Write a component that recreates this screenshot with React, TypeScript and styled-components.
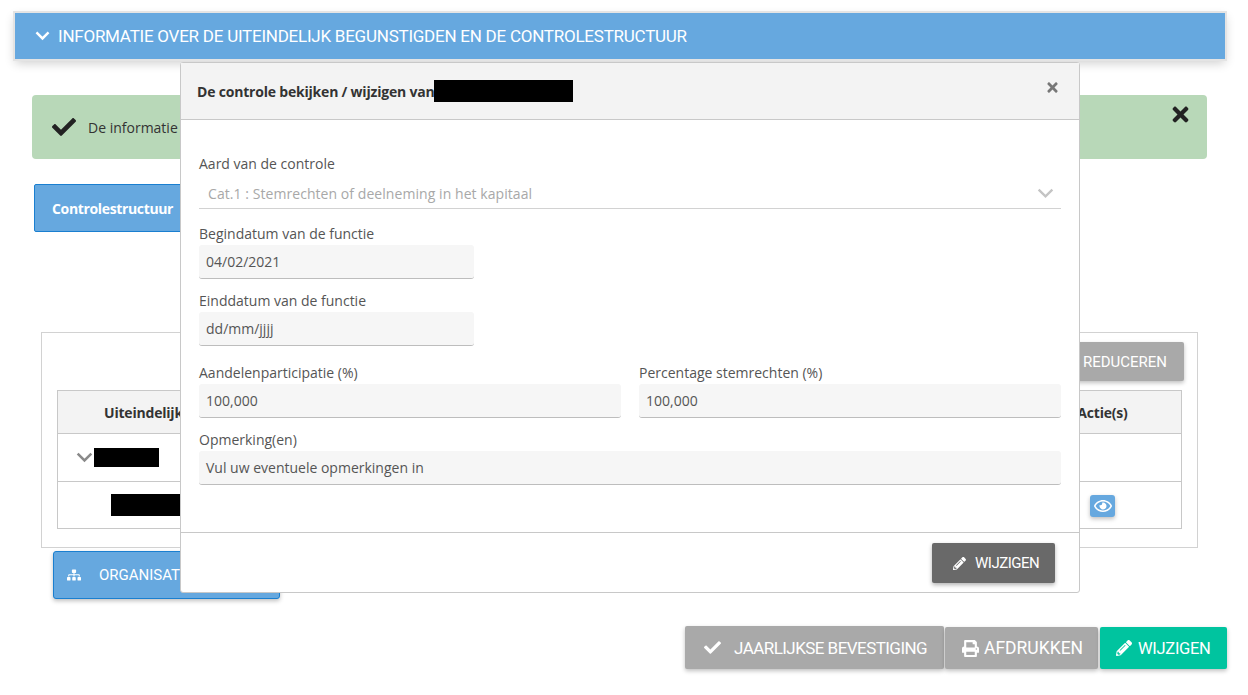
import React from 'react';
import styled, { createGlobalStyle } from 'styled-components';
import { FaCheck, FaTimes, FaPencilAlt, FaPrint, FaSitemap, FaRegEye } from 'react-icons/fa';

const Chevron: React.FC<{ size: number; stroke: number; color: string }> = ({ size, stroke, color }) => (
  <svg width={size} height={size * 0.62} viewBox="0 0 16 10" fill="none" style={{ display: 'block', flex: 'none' }}>
    <path d="M1.5 1.5 L8 8 L14.5 1.5" stroke={color} strokeWidth={stroke} />
  </svg>
);

const App: React.FC = () => {
  return (
    <Page>
      <GlobalStyle />
      <SectionBar>
        <Chevron size={15} stroke={2.6} color="#fff" />
        <span>INFORMATIE OVER DE UITEINDELIJK BEGUNSTIGDEN EN DE CONTROLESTRUCTUUR</span>
      </SectionBar>
      <Alert>
        <FaCheck size={24} color="#222" />
        <AlertText>De informatie werd goed opgeslagen</AlertText>
        <AlertClose><FaTimes size={23} /></AlertClose>
      </Alert>
      <TabRow>
        <TabButton>Controlestructuur</TabButton>
      </TabRow>
      <Panel>
        <PanelActions>
          <GreyButton>REDUCEREN</GreyButton>
        </PanelActions>
        <Table>
          <thead>
            <tr>
              <Th>Uiteindelijk</Th>
              <ActionTh>Actie(s)</ActionTh>
            </tr>
          </thead>
          <tbody>
            <tr>
              <ParentTd>
                <ParentCell>
                  <Chevron size={17} stroke={2.4} color="#8a8a8a" />
                  <Redacted $w={65} $h={19} />
                </ParentCell>
              </ParentTd>
              <ActionTd />
            </tr>
            <tr>
              <ChildTd><Redacted $w={120} $h={22} /></ChildTd>
              <ActionTd><EyeButton><FaRegEye size={18} /></EyeButton></ActionTd>
            </tr>
          </tbody>
        </Table>
      </Panel>
      <OrgButton>
        <FaSitemap size={14} />
        <span>ORGANISATIESCHEMA</span>
      </OrgButton>
      <Footer>
        <ConfirmButton><FaCheck size={17} /><span>JAARLIJKSE BEVESTIGING</span></ConfirmButton>
        <PrintButton><FaPrint size={17} /><span>AFDRUKKEN</span></PrintButton>
        <EditButton><FaPencilAlt size={16} /><span>WIJZIGEN</span></EditButton>
      </Footer>

      <Modal>
        <ModalHeader>
          <ModalTitle>De controle bekijken / wijzigen van</ModalTitle>
          <Redacted $w={139} $h={22} />
          <ModalClose><FaTimes size={15} /></ModalClose>
        </ModalHeader>
        <ModalBody>
          <Field>
            <Label>Aard van de controle</Label>
            <SelectBox>
              <span>Cat.1 : Stemrechten of deelneming in het kapitaal</span>
              <Chevron size={17} stroke={2.2} color="#c4c4c4" />
            </SelectBox>
          </Field>
          <HalfField>
            <Label>Begindatum van de functie</Label>
            <InputBox>04/02/2021</InputBox>
          </HalfField>
          <HalfField>
            <Label>Einddatum van de functie</Label>
            <InputBox>dd/mm/jjjj</InputBox>
          </HalfField>
          <TwoColumns>
            <Field>
              <Label>Aandelenparticipatie (%)</Label>
              <InputBox>100,000</InputBox>
            </Field>
            <Field>
              <Label>Percentage stemrechten (%)</Label>
              <InputBox>100,000</InputBox>
            </Field>
          </TwoColumns>
          <Field>
            <Label>Opmerking(en)</Label>
            <InputBox>Vul uw eventuele opmerkingen in</InputBox>
          </Field>
        </ModalBody>
        <ModalFooter>
          <DarkButton><FaPencilAlt size={13} /><span>WIJZIGEN</span></DarkButton>
        </ModalFooter>
      </Modal>
    </Page>
  );
};

const GlobalStyle = createGlobalStyle`
  html, body {
    margin: 0;
    padding: 0;
    background: #fff;
  }
  * {
    box-sizing: border-box;
  }
  svg {
    flex: none;
  }
`;

const capsFont = `'Roboto', 'Liberation Sans', sans-serif`;

const Page = styled.div`
  position: relative;
  width: 1248px;
  height: 695px;
  overflow: hidden;
  padding: 13px 23px 0 15px;
  font-family: 'Open Sans', 'Liberation Sans', sans-serif;
  color: #333;
`;

const SectionBar = styled.div`
  display: flex;
  align-items: center;
  gap: 8px;
  width: 1210px;
  height: 46px;
  padding: 0 0 0 20px;
  background: #66a8df;
  color: #fff;
  font-family: ${capsFont};
  font-size: 17px;
  letter-spacing: -0.24px;
  outline: 2px solid #e4e4e4;
  box-shadow: 0 4px 10px rgba(0, 0, 0, 0.2);
`;

const Alert = styled.div`
  display: flex;
  align-items: center;
  position: relative;
  width: 1175px;
  height: 64px;
  margin: 36px 0 0 17px;
  padding: 0 0 0 20px;
  background: #b8d8b8;
  border-radius: 4px;
`;

const AlertText = styled.span`
  margin-left: 12px;
  font-size: 14px;
  color: #333;
`;

const AlertClose = styled.span`
  position: absolute;
  top: 8px;
  right: 15px;
  color: #222;
`;

const TabRow = styled.div`
  margin: 25px 0 0 19px;
`;

const TabButton = styled.div`
  display: flex;
  align-items: center;
  width: 200px;
  height: 48px;
  padding: 1px 0 0 17px;
  background: #66a8df;
  border: 1px solid #1a7fd0;
  border-radius: 2px;
  color: #fff;
  font-size: 14px;
  font-weight: 700;
  letter-spacing: -0.35px;
`;

const Panel = styled.div`
  width: 1157px;
  height: 216px;
  margin: 100px 0 0 26px;
  padding: 9px 13px 0 15px;
  border: 1px solid #d2d2d2;
`;

const PanelActions = styled.div`
  display: flex;
  justify-content: flex-end;
  height: 39px;
  margin-bottom: 9px;
`;

const GreyButton = styled.div`
  display: flex;
  align-items: center;
  justify-content: flex-end;
  width: 160px;
  height: 39px;
  padding-right: 17px;
  background: #a9a9a9;
  border-radius: 2px;
  color: #fff;
  font-family: ${capsFont};
  font-size: 15px;
  box-shadow: 0 2px 4px rgba(0, 0, 0, 0.25);
`;

const Table = styled.table`
  width: 1125px;
  border-collapse: collapse;
  table-layout: fixed;
`;

const Th = styled.th`
  height: 43px;
  padding: 0 0 0 46px;
  background: #f3f3f3;
  border: 1px solid #c8c8c8;
  font-size: 14px;
  text-align: left;
  color: #333;
  letter-spacing: -0.2px;
`;

const ActionTh = styled(Th)`
  width: 158px;
  padding: 0;
  text-align: center;
`;

const ParentTd = styled.td`
  height: 48px;
  padding: 0 0 0 18px;
  border: 1px solid #c8c8c8;
`;

const ParentCell = styled.div`
  display: flex;
  align-items: center;
  gap: 1px;
`;

const ChildTd = styled.td`
  height: 47px;
  padding: 0 0 0 53px;
  border: 1px solid #c8c8c8;
`;

const ActionTd = styled.td`
  border: 1px solid #c8c8c8;
  text-align: center;
`;

const EyeButton = styled.span`
  display: inline-flex;
  align-items: center;
  justify-content: center;
  width: 25px;
  height: 22px;
  background: #66a8df;
  border-radius: 3px;
  color: #fff;
  box-shadow: 0 2px 4px rgba(0, 0, 0, 0.25);
  vertical-align: middle;
`;

const Redacted = styled.span<{ $w: number; $h: number }>`
  display: block;
  flex: none;
  width: ${({ $w }) => $w}px;
  height: ${({ $h }) => $h}px;
  background: #000;
`;

const OrgButton = styled.div`
  display: flex;
  align-items: center;
  gap: 18px;
  width: 227px;
  height: 48px;
  margin: 3px 0 0 38px;
  padding-left: 13px;
  background: #66a8df;
  border: 1px solid #1a7fd0;
  border-radius: 3px;
  color: #fff;
  font-family: ${capsFont};
  font-size: 15px;
  box-shadow: 0 2px 4px rgba(0, 0, 0, 0.25);
`;

const Footer = styled.div`
  display: flex;
  align-items: flex-end;
  justify-content: flex-end;
  gap: 1px;
  width: 1212px;
  margin-top: 27px;
`;

const FooterButton = styled.div`
  display: flex;
  align-items: center;
  flex: none;
  height: 42px;
  border-radius: 2px;
  color: #fff;
  font-family: ${capsFont};
  font-size: 17.5px;
  white-space: nowrap;
  box-shadow: 0 2px 4px rgba(0, 0, 0, 0.25);
`;

const ConfirmButton = styled(FooterButton)`
  gap: 13px;
  width: 259px;
  height: 43px;
  padding-left: 19px;
  background: #a9a9a9;
  font-size: 17px;
  letter-spacing: -0.55px;
`;

const PrintButton = styled(FooterButton)`
  gap: 5px;
  width: 153px;
  padding-left: 17px;
  background: #a9a9a9;
`;

const EditButton = styled(FooterButton)`
  gap: 6px;
  width: 127px;
  margin-left: 1px;
  padding-left: 16px;
  background: #00c49f;
  font-size: 16.5px;
  letter-spacing: -0.3px;
`;

const Modal = styled.div`
  position: absolute;
  left: 180px;
  top: 62px;
  width: 900px;
  height: 531px;
  background: #fff;
  border: 1px solid #c8c8c8;
  border-radius: 3px;
`;

const ModalHeader = styled.div`
  display: flex;
  align-items: center;
  height: 57px;
  padding: 0 16px;
  background: #f3f3f3;
  border-bottom: 1px solid #c8c8c8;
  position: relative;
`;

const ModalTitle = styled.span`
  font-size: 14px;
  font-weight: 700;
  color: #333;
  letter-spacing: -0.2px;
`;

const ModalClose = styled.span`
  position: absolute;
  top: 15px;
  right: 19px;
  color: #777;
`;

const ModalBody = styled.div`
  display: flex;
  flex-direction: column;
  height: 412px;
  padding: 35px 18px 0;
`;

const Field = styled.div`
  display: flex;
  flex-direction: column;
  flex: 0 0 auto;
  min-width: 0;
`;

const HalfField = styled.div`
  display: flex;
  flex-direction: column;
  width: 275px;
`;

const TwoColumns = styled.div`
  display: grid;
  grid-template-columns: 1fr 1fr;
  gap: 18px;
  margin-top: 5px;
`;

const Label = styled.label`
  height: 17px;
  margin: 0 0 3px;
  line-height: 17px;
  font-size: 14px;
  color: #555;
  white-space: nowrap;
`;

const SelectBox = styled.div`
  display: flex;
  align-items: center;
  justify-content: space-between;
  height: 34px;
  margin-bottom: 16px;
  padding: 4px 7px 0 9px;
  border-bottom: 1px solid #d2d2d2;
  font-size: 14px;
  letter-spacing: 0.06px;
  color: #a8a8a8;
`;

const InputBox = styled.div`
  display: flex;
  align-items: center;
  height: 34px;
  margin-bottom: 13px;
  padding-left: 7px;
  background: #f6f6f6;
  border-bottom: 1px solid #bdbdbd;
  border-radius: 3px;
  font-size: 14px;
  color: #555;
`;

const ModalFooter = styled.div`
  display: flex;
  justify-content: flex-end;
  padding: 10px 24px 0 0;
  border-top: 1px solid #c8c8c8;
  height: 60px;
`;

const DarkButton = styled.div`
  display: flex;
  align-items: center;
  gap: 9px;
  width: 123px;
  height: 40px;
  padding-left: 21px;
  background: #696969;
  border-radius: 2px;
  color: #fff;
  font-family: ${capsFont};
  font-size: 15px;
  letter-spacing: -0.5px;
  box-shadow: 0 2px 4px rgba(0, 0, 0, 0.3);
`;

export default App;
